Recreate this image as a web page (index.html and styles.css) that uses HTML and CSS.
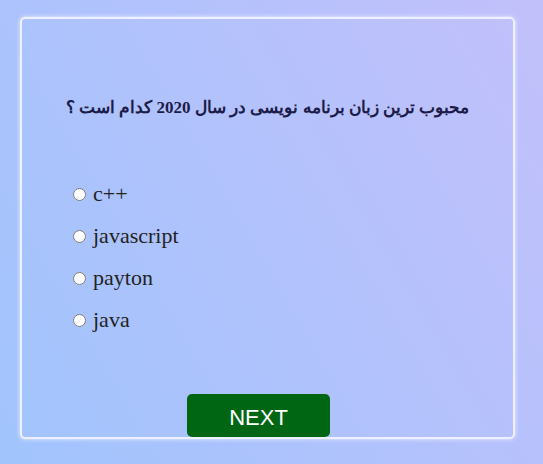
FILE: index.html
```html
<!DOCTYPE html>
<html lang="fa">
<head>
<meta charset="utf-8">
<title>Quiz</title>
<link rel="stylesheet" href="styles.css">
</head>
<body>
<div class="card">
  <h2 class="question" dir="rtl">محبوب ترین زبان برنامه نویسی در سال 2020 کدام است ؟</h2>
  <div class="options">
    <label class="option"><input type="radio" name="q">c++</label>
    <label class="option"><input type="radio" name="q">javascript</label>
    <label class="option"><input type="radio" name="q">payton</label>
    <label class="option"><input type="radio" name="q">java</label>
  </div>
  <div class="actions">
    <button class="next">NEXT</button>
  </div>
</div>
</body>
</html>
```
FILE: styles.css
```css
html, body {
  margin: 0;
  height: 100%;
}
body {
  background: linear-gradient(60deg, #a1c4fd 0%, #c2c0fb 100%);
  font-family: "Liberation Serif", "DejaVu Serif", serif;
  padding: 17px 28px 25px 20px;
  box-sizing: border-box;
}
.card {
  box-sizing: border-box;
  width: 495px;
  height: 422px;
  border: 2px solid #eef0ff;
  border-radius: 5px;
  box-shadow: 0 0 4px rgba(255,255,255,0.8);
  display: flex;
  flex-direction: column;
}
.question {
  margin: 78px 0 0 0;
  text-align: center;
  font-size: 17px;
  font-weight: bold;
  color: #1c1c48;
}
.options {
  margin-top: 63px;
  padding-left: 46px;
  display: flex;
  flex-direction: column;
  gap: 17px;
}
.option {
  font-size: 22px;
  color: #222;
  line-height: 25px;
}
.option input {
  margin: 3px 7px 0 5px;
}
.actions {
  margin-top: auto;
  padding-left: 165px;
}
.next {
  width: 143px;
  height: 43px;
  padding: 4px 0 0;
  background: #006613;
  color: #fff;
  border: none;
  border-radius: 5px;
  font-family: "Liberation Sans", Arial, sans-serif;
  font-size: 22px;
  display: block;
}
```
